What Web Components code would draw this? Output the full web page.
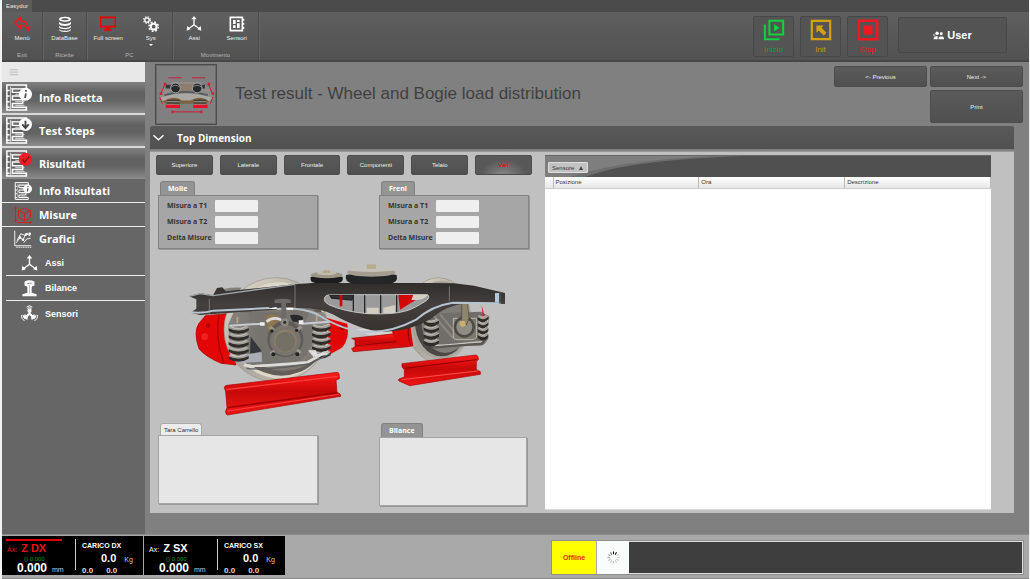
<!DOCTYPE html>
<html lang="it">
<head>
<meta charset="utf-8">
<title>Easydur</title>
<style>
html,body{margin:0;background:#f2f2f2}
body{font-family:"Open Sans","Noto Sans",sans-serif;color:#fff}
</style>
</head>
<body>
<easy-app></easy-app>
<script>
const define = (name, html) => customElements.define(name, class extends HTMLElement {
  connectedCallback() {
    if (this.shadowRoot) return;
    const root = this.attachShadow({ mode: 'open' });
    const t = document.createElement('template');
    t.innerHTML = '<style>*{box-sizing:border-box}button,input{display:block;font:inherit;color:inherit;margin:0;border:0;padding:0}</style>' + (typeof html === 'function' ? html(this) : html);
    root.append(t.content.cloneNode(true));
  }
});

const sheet = '<path fill="none" stroke="#fff" stroke-width="1.6" d="M2 1h21v4H8v4h11v4H8v4h11v4H8v4h15v3H2zM2 7h3M2 13h3M2 19h3M2 25h3"/><path fill="none" stroke="#ddd" stroke-width="1" d="M6 3v24M11 11h10M11 19h10M11 23h10M6 5h14"/>';
const axes = '<g fill="none" stroke="#fff" stroke-width="2"><path d="M12 3v10L4 19M12 13l8 6"/></g><path fill="#fff" d="M12 0l4 5H8zM1 22l1-7 5 5zM23 22l-1-7-5 5z"/>';
const icons = {
  undo: ['0 0 24 24', '<path d="M1 10 10 2v5c8 0 12 7 12 15-3-6-6-8-12-8v5z" fill="none" stroke="#f01818" stroke-width="2.200" stroke-linejoin="round"/>'],
  database: ['0 0 24 24', '<g fill="#fff"><path d="M3 5c0-5 18-5 18 0s-18 5-18 0zM3 9c4 4 14 4 18 0v3c-2 4-16 4-18 0zM3 15c4 4 14 4 18 0v2c-2 4-16 4-18 0zM3 20c4 3 14 3 18 0v1c-2 4-16 4-18 0z"/></g><path d="M6 5c2-2 10-2 12 0-2 2-10 2-12 0z" fill="#5a5a5a"/>'],
  screen: ['0 0 24 24', '<path d="M1 2h22v14H1z" fill="none" stroke="#f00000" stroke-width="2.4"/><path d="M9 17h6v3h3v2H6v-2h3z" fill="#f00000"/>'],
  gears: ['0 0 24 24', '<g fill="none" stroke="#fff"><circle cx="6" cy="6" r="3.3" stroke-width="2"/><circle cx="6" cy="6" r="5" stroke-width="1.8" stroke-dasharray="2 2"/><circle cx="16" cy="16" r="4.4" stroke-width="3"/><circle cx="16" cy="16" r="7" stroke-width="2.4" stroke-dasharray="2.8 2.7"/></g>'],
  axes: ['0 0 24 24', axes],
  chip: ['0 0 24 24', '<path d="M2 2h18v20H2z" fill="none" stroke="#fff" stroke-width="2.4"/><path d="M6 6h4v6H6zM12 6h4v3h-4zM12 11h4v7h-4zM6 14h4v4H6zM20 4h3v3h-3zM20 10h3v3h-3zM20 16h3v3h-3z" fill="#fff"/>'],
  play: ['0 0 24 24', '<path d="M7 2h15v15H7zM2 6v16h16" fill="none" stroke="#0fd23c" stroke-width="2.2"/><path d="M12 5.500l6 4-6 4z" fill="#0fd23c"/>'],
  home: ['0 0 24 24', '<path d="M2 2h20v20H2z" fill="none" stroke="#d2a30e" stroke-width="2.4"/><path d="M7 7h8l-2.500 2.500L18 15l-3 3-5.500-5.500L7 15z" fill="#d2a30e"/>'],
  stop: ['0 0 24 24', '<path d="M2 2h20v20H2z" fill="none" stroke="#f01820" stroke-width="2.800"/><path d="M7 7h10v10H7z" fill="#f01820"/>'],
  users: ['0 0 24 18', '<g fill="#fff"><circle cx="9" cy="4" r="3.800"/><circle cx="18" cy="5" r="3.200"/><path d="M1 17c0-5 4-7 9-7v7zM12 17v-3c2-4 10-4 12 0v3z"/><path d="M0 7h5v2H0z"/></g>'],
  info: ['0 0 29 29', sheet + '<circle cx="22" cy="11" r="7" fill="#fff"/><path d="M22.500 6.500v1.800M22.500 10l-1 5" stroke="#555" stroke-width="2"/>'],
  steps: ['0 0 29 29', sheet + '<circle cx="22" cy="8" r="7" fill="#fff"/><path d="M22 4v7M18.500 8l3.500 4 3.500-4" fill="none" stroke="#444" stroke-width="2"/>'],
  result: ['0 0 29 29', sheet + '<circle cx="22" cy="10" r="7" fill="#ee1c24"/><path d="M19 10l2 3 5-6" fill="none" stroke="#7c1010" stroke-width="1.400"/>'],
  cube: ['0 0 24 24', '<g fill="none" stroke="#d3201f" stroke-width="1.300"><path d="M14 3l8 3v9l-8 5-8-5V6zM6 6l8 4 8-4M14 10v10M2 2v20M0 4l2-3 2 3M0 19h4M5 22h18M20 20l3 2-3 2"/></g>'],
  chart: ['0 0 24 24', '<g fill="none" stroke="#fff" stroke-width="1.200"><path d="M1 1v20h22M3 17l5-7 4 3 4-8 6 3M4 14l5-9 5 2 5-3M13 17l4-5 5-1"/><path d="M3 23h20" stroke-dasharray="2 1"/></g><g fill="#fff"><circle cx="8" cy="10" r="1.700"/><circle cx="12" cy="13" r="1.700"/><circle cx="16" cy="6" r="1.700"/><circle cx="21" cy="5" r="1.700"/></g>'],
  rail: ['0 0 24 24', '<path d="M5 2q7-3 14 0v6q-4 0-4 3v7l7 2v3H2v-3l7-2v-7q0-3-4-3z" fill="#fff"/><path d="M9 5q3-1 6 0" stroke="#666" fill="none"/><path d="M12 7v12" stroke="#aaa"/>'],
  sensors: ['0 0 24 24', '<g fill="none" stroke="#fff" stroke-width="1.400"><path d="M8 3q4-4 8 0M9 5q3-3 6 0M1 14q-1 6 4 8M23 14q1 6-4 8M3 14q0 4 3 6M21 14q0 4-3 6"/><path d="M12 8v4l-5 5M12 12l5 5" stroke-width="3"/></g><circle cx="12" cy="8" r="3" fill="#fff"/><path d="M5 13l5 2-1 6-5-3zM19 13l-5 2 1 6 5-3z" fill="#fff"/>'],
  bars: ['0 0 24 24', '<path d="M2 6h20M2 12h20M2 18h20" stroke="#c4c4c4" stroke-width="3"/>'],
  chevron: ['0 0 24 24', '<path d="M1 7l11 10L23 7" fill="none" stroke="#fff" stroke-width="3"/>'],
  spinner: ['-12 -12 24 24', Array.from({length: 12}, (_, i) => `<path d="M0-6v-5" stroke="#000" stroke-width="2" opacity="${[1,.9,.15,.15,.2,.2,.25,.25,.3,.35,.4,.6][i]}" transform="rotate(${i * 30})"/>`).join('')]
};
define('ui-icon', el => {
  const [box, body] = icons[el.getAttribute('name')];
  return `<style>:host{display:block;flex:none;width:var(--icon,16px);height:var(--icon,16px)}svg{display:block;width:100%;height:100%}</style><svg viewBox="${box}" aria-hidden="true">${body}</svg>`;
});

define('ribbon-group', el => `<style>
:host{display:flex;flex-direction:column;border-right:1px solid #4a4a4a;box-shadow:1px 0 #646464;text-align:center}
.row{display:flex;flex:1}.row ::slotted(*){flex:1}
.name{font:6px/10px "Liberation Sans",sans-serif;color:#b4b4b4}</style>
<div class="row"><slot></slot></div><div class="name">${el.getAttribute('name')}</div>`);

define('ribbon-button', el => `<style>
:host{display:block}button{width:100%;background:none;display:flex;flex-direction:column;align-items:center;padding-top:4px;font:6px/8px "Liberation Sans",sans-serif;color:#eee;--icon:16px;gap:2px}
i{border:2px solid transparent;border-top-color:#fff;border-bottom:0}</style>
<button><ui-icon name="${el.getAttribute('icon')}"></ui-icon><slot></slot>${el.hasAttribute('menu') ? '<i></i>' : ''}</button>`);

define('command-button', el => `<style>
:host{display:block;width:41px;height:41px}button{width:100%;height:100%;background:#545454;border:1px solid #484848;border-radius:2px;display:flex;flex-direction:column;align-items:center;padding-top:2px;gap:4px;font:8px/10px "Liberation Sans",sans-serif;color:${el.getAttribute('tone')};--icon:22px}</style>
<button><ui-icon name="${el.getAttribute('icon')}"></ui-icon><slot></slot></button>`);

define('app-ribbon', `<style>
:host{display:block;background:#4b4b4b;border-bottom:2px solid #474747}
.tab{width:30px;height:12px;background:#5b5b5b;font:6px/12px "Liberation Sans",sans-serif;text-align:center;color:#e6e6e6}
.bar{display:flex;height:48px;background:linear-gradient(#5f5f5f,#525252)}
.g1{width:41px}.g2{width:44px}.g3{width:86px}
.cmd{margin-left:auto;display:flex;gap:6px;padding:4px 22px 0 0}
.user{width:109px;height:36px;margin:1px 0 0 4px;background:#535353;border:1px solid #484848;border-radius:2px;display:flex;align-items:center;justify-content:center;gap:3px;font:bold 11px/14px "Liberation Sans",sans-serif;--icon:11px}
</style>
<button class="tab">Easydur</button>
<div class="bar">
<ribbon-group class="g1" name="Exit"><ribbon-button icon="undo">Menù</ribbon-button></ribbon-group>
<ribbon-group class="g2" name="Ricette"><ribbon-button icon="database">DataBase</ribbon-button></ribbon-group>
<ribbon-group class="g3" name="PC"><ribbon-button icon="screen">Full screen</ribbon-button><ribbon-button icon="gears" menu>Sys</ribbon-button></ribbon-group>
<ribbon-group class="g3" name="Movimento"><ribbon-button icon="axes">Assi</ribbon-button><ribbon-button icon="chip">Sensori</ribbon-button></ribbon-group>
<div class="cmd">
<command-button icon="play" tone="#0ca81c">Inizio</command-button>
<command-button icon="home" tone="#c89a10">Init</command-button>
<command-button icon="stop" tone="#ee1414">Stop</command-button>
<button class="user"><ui-icon name="users"></ui-icon>User</button>
</div></div>`);

define('nav-item', el => `<style>
:host{display:block}
a{display:flex;align-items:center;color:#fff;text-decoration:none;font-weight:700;font-size:11px;line-height:16px}
a.main{height:33px;gap:7px;padding-left:3px;border-bottom:2px solid #d8d8d8;background:linear-gradient(#808080,#606060 35%,#646464 60%,#8c8c8c);--icon:27px}
:host([last]) a.main{height:31px;border-bottom:0}
a.sub{height:24px;gap:7px;padding-left:12px;--icon:18px}
a.leaf{height:25px;gap:7px;margin-left:4px;padding-left:15px;--icon:17px;font:bold 9px/12px "Liberation Sans",sans-serif}
a.line{border-bottom:1px solid #eee}
</style><a href="#" class="${el.getAttribute('kind')}${el.hasAttribute('line') ? ' line' : ''}"><ui-icon name="${el.getAttribute('icon')}"></ui-icon><slot></slot></a>`);

define('side-nav', `<style>
:host{display:block;background:#666}
button{width:100%;height:20px;background:#e8e8e8;padding-left:7px;--icon:10px}</style>
<button aria-label="Menu"><ui-icon name="bars"></ui-icon></button>
<nav>
<nav-item kind="main" icon="info">Info Ricetta</nav-item>
<nav-item kind="main" icon="steps">Test Steps</nav-item>
<nav-item kind="main" icon="result" last>Risultati</nav-item>
<nav-item kind="sub" icon="info" line>Info Risultati</nav-item>
<nav-item kind="sub" icon="cube" line>Misure</nav-item>
<nav-item kind="sub" icon="chart">Grafici</nav-item>
<nav-item kind="leaf" icon="axes" line>Assi</nav-item>
<nav-item kind="leaf" icon="rail" line>Bilance</nav-item>
<nav-item kind="leaf" icon="sensors">Sensori</nav-item>
</nav>`);

define('flat-button', `<style>
:host{display:block;height:21px}
button{width:100%;height:100%;background:linear-gradient(#5a5a5a,#505050);border-radius:2px;border:1px solid #4c4c4c;font:6px/8px "Liberation Sans",sans-serif;color:#eee}
:host([on]) button{color:#f00000;background:radial-gradient(ellipse at 50% 120%,#8c8c8c,#585858 60%)}
</style><button><slot></slot></button>`);

define('bogie-thumb', `<style>:host{display:block;width:62px;height:61px;border:1px solid #4b4b4b;outline:1px solid #6a6a6a;outline-offset:-2px}svg{display:block;width:100%;height:100%}</style>
<svg viewBox="0 0 180 180" role="img" aria-label="Carrello">
<path d="M10 100l8-28 30-20h85l30 20 8 28-12 16H22z" fill="#8e8b88"/>
<path d="M28 60h120v12H28z" fill="#33373c"/><path d="M50 58h80l-10 28H62z" fill="#8f7c6c"/>
<path d="M10 100q80-26 160 0l-14 16q-64-14-130 0z" fill="#aaa8a2"/>
<path d="M18 112q36-22 60-4h26q30-18 58 4l-12 6H28z" fill="#7c6242"/>
<path d="M24 92q66-20 132 0" fill="none" stroke="#515962" stroke-width="6"/>
<g fill="#26282b" stroke="#a5a5a0" stroke-width="3"><circle cx="58" cy="70" r="15"/><circle cx="124" cy="70" r="15"/></g>
<path d="M44 68q14-12 28 0M110 68q14-12 28 0" stroke="#888" stroke-width="3" fill="none"/>
<g fill="#3c3b33"><path d="M32 106h38v20H32zM114 106h38v20h-38z"/></g>
<path d="M32 112h38M32 120h38M114 112h38M114 120h38" stroke="#aaa18b" stroke-width="3"/>
<path d="M28 121h44v10H28zM112 121h44v10h-44z" fill="#e8102a"/>
<path d="M36 39h40M108 39h40M48 143h90M26 58L14 86M10 98l8 20M158 58l12 28M172 98l-8 20" stroke="#cf1836" stroke-width="3"/>
<path d="M46 139h6v8h-6zM134 139h6v8h-6zM22 54h8v8h-8zM10 84h8v7h-8zM156 54h8v8h-8zM168 84h8v7h-8z" fill="#d81836"/></svg>`);

const spring = (x, y, w, n, s) => Array.from({length: n}, (_, i) =>
  `<g transform="translate(${x} ${y + i * s})"><path d="M0 0Q${w / 2} 16 ${w} 0v9Q${w / 2} 27 0 10z" fill="#2e2b29"/><path d="M1-1Q${w / 2} 12 ${w - 1}-2" fill="none" stroke="#a09d96" stroke-width="6"/><path d="M5-3Q${w / 2} 8 ${w - 6}-4" fill="none" stroke="#e4e2dc" stroke-width="2"/></g>`).join('');

define('bogie-view', `<style>:host{display:block}svg{display:block;width:325px;height:165px}</style>
<svg viewBox="0 0 975 495" role="img" aria-label="Carrello ferroviario">
<defs>
<linearGradient id="red" x2="0" y2="1"><stop stop-color="#ff1a1a"/><stop offset=".45" stop-color="#c80808"/><stop offset="1" stop-color="#f01515"/></linearGradient>
<linearGradient id="frame" x2="0" y2="1"><stop stop-color="#302d2c"/><stop offset=".45" stop-color="#45403e"/><stop offset="1" stop-color="#37322f"/></linearGradient>
<linearGradient id="steel"><stop stop-color="#8a8783"/><stop offset=".5" stop-color="#716d69"/><stop offset="1" stop-color="#8f8b86"/></linearGradient>
<linearGradient id="wheel" x2="1" y2="1"><stop stop-color="#e6e0cf"/><stop offset=".5" stop-color="#aaa69e"/><stop offset="1" stop-color="#c9c6bf"/></linearGradient>
</defs>
<path d="M530 222q60 40 120 4l-20-8z" fill="#d6d4d0"/>
<path d="M515 250l130-14 60 32-20 7-165 15-5-9 10-6v-20z" fill="url(#red)" stroke="#900" stroke-width="2"/><path d="M528 272l150-15" stroke="#900" stroke-width="3"/>
<ellipse cx="775" cy="195" rx="98" ry="127" fill="url(#wheel)" stroke="#999386" stroke-width="2"/>
<ellipse cx="783" cy="195" rx="90" ry="118" fill="#a8a49c"/>
<ellipse cx="785" cy="200" rx="80" ry="104" fill="#4a4745"/>
<ellipse cx="796" cy="198" rx="72" ry="96" fill="#807c77"/>
<path d="M634 222l56-18 10 70q-36 4-56-20zM654 120l60-4-4 14-62 48z" fill="#df0808"/><path d="M690 200q-12 30 2 72" stroke="#8c0000" stroke-width="3" fill="none"/>
<path d="M76 182l64-6 28 154-45-5q-50-22-66-44-18-50 0-76z" fill="#e20606" stroke="#a00" stroke-width="2"/>
<circle cx="84" cy="212" r="7" fill="#b00"/><circle cx="74" cy="245" r="10" fill="#f02020"/><path d="M118 180q-15 60 14 146" stroke="#a80000" stroke-width="4" fill="none"/>
<path d="M438 188l64 18q8 46-16 72l-40 22z" fill="#e20606"/><circle cx="486" cy="218" r="7" fill="#900"/>
<ellipse cx="288" cy="224" rx="156" ry="156" fill="url(#wheel)" stroke="#999386" stroke-width="2"/>
<ellipse cx="298" cy="226" rx="144" ry="144" fill="#dcd7c8"/>
<ellipse cx="304" cy="232" rx="138" ry="130" fill="#625d56"/>
<ellipse cx="310" cy="238" rx="126" ry="110" fill="#7e7870"/>
<path d="M110 112q20-16 74-14l-10 12-50 8zM145 208l16-36h270l20 36-60 80-20 36-170 4-50-40z" fill="url(#steel)"/>
<path d="M172 185v20M410 180v24" stroke="#b5a78a" stroke-width="5"/>
<path d="M205 170h40l-6 30h-30zM330 165h60l-16 40-34-20z" fill="#77736e"/>
<path d="M212 245l34 44-36 8z" fill="#34383c"/><path d="M180 300l66-8v28l-70 5z" fill="#a9aeb6"/>
<path d="M255 184q20-12 40 0 30 20 30 60h-60z" fill="#8d7650"/><path d="M260 200q24-22 60 4" fill="none" stroke="#ddd" stroke-width="8"/><path d="M330 180q35-4 40 10l-15 22q-20-6-25-32z" fill="#2b2a2b"/>
<path d="M242 210l28 20 20-30h60l14 10h68l-30 40-22 50-30 22-104 2z" fill="#76726d"/>
<circle cx="316" cy="252" r="54" fill="#5f5b57"/><path d="M270 216l92 78M364 214l-92 84" stroke="#9a968e" stroke-width="10"/><circle cx="316" cy="256" r="46" fill="#79756e"/><circle cx="316" cy="258" r="34" fill="#8b8066"/><circle cx="316" cy="260" r="30" fill="#757066"/>
<g fill="#222"><circle cx="276" cy="228" r="5"/><circle cx="350" cy="226" r="5"/><circle cx="280" cy="298" r="6"/><circle cx="352" cy="298" r="6"/></g>
${spring(146, 218, 60, 5, 21)}${spring(396, 212, 56, 5, 20)}
<path d="M148 212l100-6M365 206l84-6" stroke="#c7ccd2" stroke-width="6"/><path d="M240 202h14v10h-14zM356 196h14v12h-14z" fill="#eee"/>
<path d="M192 330q10 8 190-8l50-28" fill="none" stroke="#dcdcda" stroke-width="8"/><path d="M200 340q60 8 190-14l60-30" fill="none" stroke="#5b5d61" stroke-width="4"/><path d="M384 286h24l4 12 38-6-10 8-40 6z" fill="#ddd"/>
<path d="M742 176l160-6 26 14-6 70q-6 18-26 18H755z" fill="#716d68"/><path d="M760 180l60 70M780 178l50 60" stroke="#8b8780" stroke-width="6"/>
<path d="M820 190h70v52q0 12-18 12h-40q-14 0-12-14z" fill="#7f7a6f" stroke="#bbb5a8" stroke-width="3"/>
<circle cx="853" cy="216" r="32" fill="#4d4945"/><circle cx="853" cy="216" r="24" fill="#918c83"/><path d="M845 120h22v8h-6l6 62-8 20-14-14z" fill="#8e8668" stroke="#444" stroke-width="2"/><circle cx="848" cy="206" r="9" fill="#c8b06c"/>
<path d="M742 268q16 8 120-4l50-4q18-6 10-70" fill="none" stroke="#cac7bf" stroke-width="5"/><path d="M755 278l150-12 18-18" fill="none" stroke="#5b5753" stroke-width="7"/>
<path d="M905 150l14 54-8 26z" fill="#d02222"/>
${spring(731, 196, 46, 4, 20)}${spring(893, 184, 32, 4, 18)}
<path d="M27 124l34-9 38 6 12-22 16-2 10 12 208-21 52-4h345l80 1 60 7 103 24v31l-120-3q-68 6-112 48-70 40-150 38-60-4-145-52-50-24-118-18L60 180l-29-7 18-12v-28z" fill="url(#frame)"/>
<path d="M27 124l34-8 38 6 246-34" fill="none" stroke="#9fa5a8" stroke-width="4"/><path d="M345 90v68M88 132v44M808 94v45" stroke="#777" stroke-width="3"/>
<path d="M31 172q40 4 70-5l167-8M290 162q70-6 120 15 90 56 156 54 74 0 144-38 44-40 108-50l144 2" fill="none" stroke="#b6c3d0" stroke-width="6"/>
<path d="M268 160l22-4v6h-22zM320 158h20v6h-20z" fill="#fff"/>
<path d="M433 133q0-14 20-14h290q8 8-4 18-44 28-66 32-36 10-110 7-70-6-117-27-14-8-13-16z" fill="#9b9b9c" stroke="#c4c4c4" stroke-width="3"/>
<path d="M450 121h70l-5 14-60-6zM520 121v48M554 121v52M602 121v54M650 121v50" fill="#333" stroke="#25292b" stroke-width="4"/><path d="M479 120h8v34h-8zM655 120h65l-12 14-48 30z" fill="#d20808"/><path d="M610 158l36-8v24h-36zM560 158h36v18h-36zM700 119h44q-10 14-30 16h-20z" fill="#d3cec2"/>
<path d="M284 134q24-6 48 0v10h-14v50h-14v-50h-20z" fill="#6c6966"/><circle cx="314" cy="202" r="12" fill="#8d8984"/><circle cx="314" cy="202" r="5" fill="#333"/>
<path d="M945 114h12v28h-12z" fill="#b5c9da"/><path d="M960 110v36" stroke="#555" stroke-width="4"/>
<path d="M392 66q48-14 96 0 4 16-14 18h-68q-18-2-14-18z" fill="#1d1d1e"/><ellipse cx="440" cy="60" rx="48" ry="10" fill="#9d9687"/><ellipse cx="440" cy="54" rx="30" ry="6" fill="#c1bcae"/><path d="M430 46h20v8h-20z" fill="#b2a78a"/>
<path d="M498 60q75-18 152 0 6 24-22 26H520q-28-4-22-26z" fill="#242526"/><ellipse cx="574" cy="52" rx="73" ry="13" fill="#a49d90"/><ellipse cx="574" cy="44" rx="66" ry="7" fill="#c5c1b9"/><path d="M560 28h28v14h-28z" fill="#b9ac8c"/>
<path d="M133 398q0-6 8-7l332-39q6 2 5 19l-10 4 3 38q12 2 11 11l-340 56q-6-2-5-12l4-10-4-48z" fill="url(#red)" stroke="#a00" stroke-width="2"/><path d="M138 404l335-40" stroke="#ff4040" stroke-width="4"/><path d="M142 458l330-45" stroke="#980000" stroke-width="4"/><path d="M142 468l335-50" stroke="#ff4040" stroke-width="3"/>
<path d="M666 326l222-26q8 2 7 14l-6 4v26l12 6v8l-212 34-32-14q-4-4 0-6l16-6v-22l-7-8z" fill="url(#red)" stroke="#a00" stroke-width="2"/><path d="M674 340l216-26" stroke="#900000" stroke-width="3"/><path d="M665 374l228-26" stroke="#ff5050" stroke-width="3"/>
</svg>`);

define('measure-box', el => `<style>
:host{display:block;color:#333}
.tab{width:fit-content;margin-left:2px;padding:0 7px;height:14px;border:1px solid #808080;border-bottom:0;border-radius:3px 3px 0 0;background:#949494;color:#fff;font-weight:700;font-size:7px;line-height:14px}
.tab.plain{height:12px;padding:0 3px;background:#ececec;color:#333;font:6px/12px "Liberation Sans",sans-serif;border-color:#aaa}
.body{border:1px solid #838383;box-shadow:1px 1px #989898;background:#a6a6a6;height:54px;padding:4px 0 0 8px;display:flex;flex-direction:column;gap:4px}
.body.empty{height:69px;background:#e6e6e6;border-color:#a4a4a4}
.row{display:flex;align-items:center;height:12px}
label{width:48px;font-weight:700;font-size:7px;line-height:12px;white-space:nowrap}
input{width:43px;height:12px;background:#efefef;border-radius:1px}
</style>
<div class="tab${el.hasAttribute('plain') ? ' plain' : ''}">${el.getAttribute('name')}</div>
${el.hasAttribute('empty') ? '<div class="body empty"></div>' : '<div class="body">' + ['Misura a T1', 'Misura a T2', 'Delta Misure'].map((t, i) => `<div class="row"><label for="f${i}">${t}</label><input id="f${i}"></div>`).join('') + '</div>'}`);

define('sensor-grid', `<style>
:host{display:flex;flex-direction:column;background:#fff;color:#333;font:6px/8px "Liberation Sans",sans-serif;border-bottom:1px solid #d8d8d8}
.band{position:relative;height:22px;padding:6px 3px 0;background:#505050;overflow:hidden;border-top:1px solid #666}
svg{position:absolute;inset:0;width:300px;height:22px}
.chip{position:relative;display:flex;justify-content:space-between;align-items:center;width:40px;height:11px;padding:0 4px 0 3px;background:#c2c2c2;border:1px solid #ddd;border-radius:1px;color:#333}
i{border:2px solid transparent;border-bottom:4px solid #444;border-top:0}
table{width:100%;border-collapse:collapse;table-layout:fixed}
th{height:11px;padding:0 0 0 2px;font-weight:400;text-align:left;background:linear-gradient(#fff,#e6e6e6);border-right:1px solid #bbb;border-bottom:1px solid #ccc}
th:first-child{width:8px}
</style>
<div class="band"><svg viewBox="0 0 300 22" preserveAspectRatio="none" aria-hidden="true"><path d="M0 0h200Q80 4 38 22H0z" fill="#6e6e6e"/><path d="M0 0h165Q70 5 22 22H0z" fill="#7e7e7e"/></svg>
<button class="chip">Sensore <i></i></button></div>
<table><thead><tr><th aria-label="Riga"></th><th>Posizione</th><th>Ora</th><th>Descrizione</th></tr></thead></table>`);

define('result-page', `<style>
:host{display:block;background:#808080;padding:0 6px 0 5px}
.head{display:flex;height:64px;padding:2px 0 0 5px}
h1{margin:0 0 0 18px;font:400 17px/60px "Liberation Sans",sans-serif;color:#404040;white-space:nowrap}
.acts{margin-left:auto;display:grid;grid-template-columns:93px 93px;grid-template-rows:21px 33px;gap:3px;padding-top:2px}
.acts :last-child{grid-column:2;height:33px}
.fold{display:flex;align-items:center;gap:13px;width:calc(100% - 9px);height:23px;padding-left:3px;background:linear-gradient(#595959,#505050);border-radius:2px 2px 0 0;font-weight:700;font-size:10px;line-height:16px;--icon:11px}
.panel{display:flex;margin:2px 9px 0 0;background:#c0c0c0;min-height:362px;padding:3px 23px 3px 6px;border-top:1px solid #999}
.left{flex:0 0 376px;margin-right:13px;display:flex;flex-direction:column}
.tabs{display:grid;grid-template-columns:repeat(6,1fr);gap:7px}
.tabs>*{height:20px}
.two{display:flex;justify-content:space-between;padding:0 3px 0 2px}
.top{margin-top:6px}.low{margin-top:3px}
.m{width:160px}.f{width:150px}.b{width:148px;margin-right:2px}
bogie-view{margin:6px 0 0 24px}
sensor-grid{flex:1}
</style>
<div class="head"><bogie-thumb></bogie-thumb><h1>Test result - Wheel and Bogie load distribution</h1>
<div class="acts"><flat-button>&lt;- Previous</flat-button><flat-button>Next -&gt;</flat-button><flat-button>Print</flat-button></div></div>
<button class="fold"><ui-icon name="chevron"></ui-icon>Top Dimension</button>
<section class="panel"><div class="left">
<div class="tabs"><flat-button>Superiore</flat-button><flat-button>Laterale</flat-button><flat-button>Frontale</flat-button><flat-button>Componenti</flat-button><flat-button>Telaio</flat-button><flat-button on>Vari</flat-button></div>
<div class="two top"><measure-box class="m" name="Molle"></measure-box><measure-box class="f" name="Freni"></measure-box></div>
<bogie-view></bogie-view>
<div class="two low"><measure-box class="m" name="Tara Carrello" empty plain></measure-box><measure-box class="b" name="Bilance" empty></measure-box></div>
</div><sensor-grid></sensor-grid></section>`);

define('axis-readout', el => `<style>
:host{display:flex;width:141px;height:39px;background:#000;font-family:"Liberation Sans",sans-serif;padding:3px 4px 0;color:#fff}
.a{width:69px;border-top:2px solid transparent}
:host([active]) .a{border-image:linear-gradient(90deg,#e00000 55px,transparent 55px) 1;border-top:2px solid}
:host([active]) .n{color:#e81010}
.n{display:flex;align-items:baseline;gap:4px;font:7px/12px "Liberation Sans",sans-serif;padding:1px 0 0 1px}
.n b{font-size:11px}
.g{font-size:6px;line-height:6px;color:#0c9c1c;padding-left:18px}
.v{display:flex;align-items:baseline;gap:5px;font-size:7px;line-height:12px;padding-left:11px;color:#ccc}
.v b{font-size:12px;color:#fff}
.c{border-left:1px solid #ccc;height:31px;padding-left:6px;font-weight:700;flex:1}
.t{font-size:7px;line-height:14px;white-space:nowrap}
.w{display:flex;align-items:baseline;gap:8px;padding-left:19px;font-size:11px;line-height:10px}
.w span{font-size:7px;font-weight:400;color:#ccc}
.s{display:flex;gap:13px;font-size:8px;line-height:12px;color:#ddd}
</style>
<div class="a"><div class="n">Ax: <b>Z ${el.getAttribute('side')}</b></div><div class="g">() 0.000</div><div class="v"><b>0.000</b>mm</div></div>
<div class="c"><div class="t">CARICO ${el.getAttribute('side')}</div><div class="w">0.0 <span>Kg</span></div><div class="s"><span>0.0</span><span>0.0</span></div></div>`);

define('status-bar', `<style>
:host{display:flex;gap:1px;height:45px;background:#a8a8a8;border-top:1px solid #8a8a8a;border-bottom:1px solid #888;padding-top:1px}
.state{flex:1;display:flex;height:35px;margin:4px 5px 0 265px;border:1px solid #909090;min-width:0}
.off{width:44px;background:#ff0;color:#f02800;font:bold 7px/33px "Liberation Sans",sans-serif;text-align:center}
.load{width:32px;margin-left:1px;background:#fafcfb;display:grid;place-items:center;--icon:13px}
.msg{flex:1;background:#3e3e3e;border:1px solid #ddd;border-left:0}
</style><axis-readout side="DX" active></axis-readout><axis-readout side="SX"></axis-readout>
<div class="state"><div class="off">Offline</div><div class="load"><ui-icon name="spinner"></ui-icon></div><div class="msg"></div></div>`);

define('easy-app', `<style>
:host{display:flex;flex-direction:column;min-height:100vh;margin:0 1px 0 2px}
.mid{flex:1;display:grid;grid-template-columns:143px 1fr}
result-page{min-width:0}
</style><app-ribbon></app-ribbon><div class="mid"><side-nav></side-nav><result-page></result-page></div><status-bar></status-bar>`);
</script>
</body>
</html>
